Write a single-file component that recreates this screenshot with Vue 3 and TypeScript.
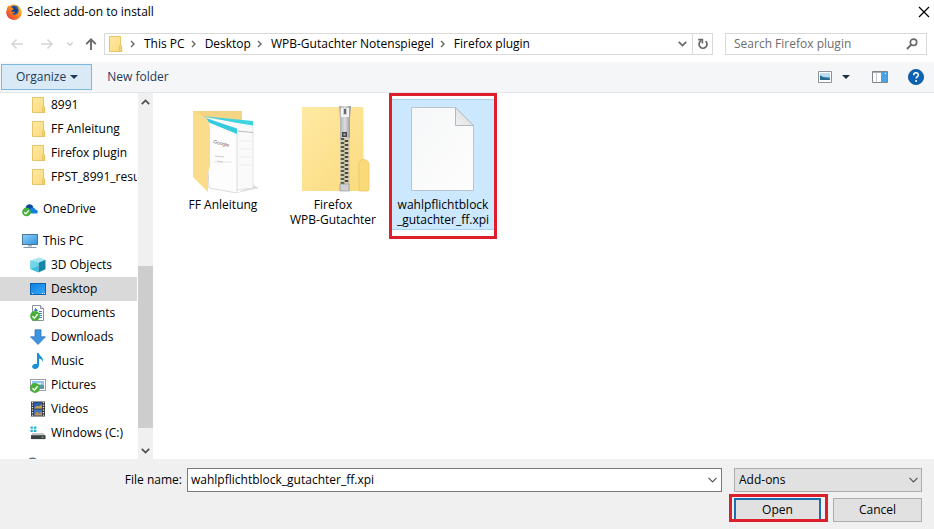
<script setup lang="ts">
import { ref } from 'vue'

interface TreeItem {
  label: string
  icon: string
  level: number
  gapBefore?: boolean
}

interface FileItem {
  lines: string[]
  icon: string
}

const crumbs: string[] = ['This PC', 'Desktop', 'WPB-Gutachter Notenspiegel', 'Firefox plugin']

const tree: TreeItem[] = [
  { label: '8991', icon: 'folder', level: 1 },
  { label: 'FF Anleitung', icon: 'folder', level: 1 },
  { label: 'Firefox plugin', icon: 'folder', level: 1 },
  { label: 'FPST_8991_result', icon: 'folder', level: 1 },
  { label: 'OneDrive', icon: 'onedrive', level: 0, gapBefore: true },
  { label: 'This PC', icon: 'pc', level: 0, gapBefore: true },
  { label: '3D Objects', icon: 'cube', level: 1 },
  { label: 'Desktop', icon: 'desktop', level: 1 },
  { label: 'Documents', icon: 'documents', level: 1 },
  { label: 'Downloads', icon: 'downloads', level: 1 },
  { label: 'Music', icon: 'music', level: 1 },
  { label: 'Pictures', icon: 'pictures', level: 1 },
  { label: 'Videos', icon: 'videos', level: 1 },
  { label: 'Windows (C:)', icon: 'drive', level: 1 },
]

const files: FileItem[] = [
  { lines: ['FF Anleitung'], icon: 'folder-open' },
  { lines: ['Firefox', 'WPB-Gutachter'], icon: 'folder-zip' },
  { lines: ['wahlpflichtblock', '_gutachter_ff.xpi'], icon: 'file' },
]

const activeFolder = ref('Desktop')
const selectedFile = ref(2)
const search = ref('')
const fileName = ref('wahlpflichtblock_gutachter_ff.xpi')
const fileType = ref('Add-ons')

function selectFile(index: number): void {
  selectedFile.value = index
  fileName.value = files[index].lines.join(files[index].icon === 'file' ? '' : ' ')
}
</script>

<template>
  <div class="dialog">
    <svg class="sprite" aria-hidden="true">
      <defs>
        <linearGradient id="g-folder" x1="0" y1="0" x2="1" y2="1">
          <stop offset="0" stop-color="#ffe9a4" /><stop offset="1" stop-color="#fada7c" />
        </linearGradient>
        <linearGradient id="g-screen" x1="0" y1="0" x2="1" y2="1">
          <stop offset="0" stop-color="#8fd0fa" /><stop offset="1" stop-color="#2f93dc" />
        </linearGradient>
        <linearGradient id="g-desk" x1="0" y1="0" x2="1" y2="1">
          <stop offset="0" stop-color="#0f7fe0" /><stop offset="1" stop-color="#36a9f8" />
        </linearGradient>
        <linearGradient id="g-page" x1="0" y1="0" x2="1" y2="1">
          <stop offset="0" stop-color="#f6f7f8" /><stop offset="1" stop-color="#fdfdfd" />
        </linearGradient>
        <linearGradient id="g-fold" x1="0" y1="1" x2="1" y2="0">
          <stop offset="0" stop-color="#f4f4f5" /><stop offset="1" stop-color="#cfd1d4" />
        </linearGradient>
        <linearGradient id="g-zip" x1="0" y1="0" x2="1" y2="0">
          <stop offset="0" stop-color="#a9aaac" /><stop offset=".5" stop-color="#dddddf" /><stop offset="1" stop-color="#8f9093" />
        </linearGradient>
        <linearGradient id="g-fox" x1="1" y1="0" x2="0" y2="1">
          <stop offset="0" stop-color="#ffd93b" /><stop offset=".45" stop-color="#ff8a1c" /><stop offset="1" stop-color="#e3264a" />
        </linearGradient>
      </defs>

      <symbol id="firefox" viewBox="0 0 16 16">
        <circle cx="8" cy="8.200" r="7.600" fill="url(#g-fox)" />
        <circle cx="8.400" cy="6.800" r="5.300" fill="#2b5fb3" />
        <path d="M7 2.200c2 .2 3 1.500 2.400 2.600l2.500.6-.8 3-3 1.800L5 8z" fill="#173f86" />
        <path d="M1 4.500C1.400 3 2 2.300 2.700 1.600l.8 1.900C5 3 6 3.400 6.600 4l1 1.300-2.300 1.400.3 1.200c1.500-.4 2.500.2 3.600-.1-.6 1.600-2 1.500-3 1.700 2 2.400 6.200 1 6.500-2.500.2-2-.7-3.500-1.700-4.500 2.300.8 4.500 3.200 4.600 6.200-.2 4-3.400 7-7.500 7C3.500 15.700.4 12.500.4 8.600z" fill="url(#g-fox)" />
      </symbol>

      <symbol id="folder" viewBox="0 0 16 16">
        <path d="M2.500.5h11v8.600l1.100 1.500v4.900H2.500z" fill="url(#g-folder)" stroke="#e6c56a" />
        <path d="M12.500 15.500V10.500l1-1.500 1.100 1.600v4.900z" fill="#f7d678" stroke="#e0b954" stroke-width=".7" />
      </symbol>

      <symbol id="tick" viewBox="0 0 9 9">
        <circle cx="4.500" cy="4.500" r="4.400" fill="#46b037" />
        <path d="M2.200 4.700l1.700 1.700 3-3.500" fill="none" stroke="#fff" stroke-width="1.300" />
      </symbol>

      <symbol id="onedrive" viewBox="0 0 16 16">
        <path d="M3.500 9C3 5.500 5 3.500 7.300 3.200c2 0 3.200 1 3.900 2.600L9 12H4z" fill="#0a4a9c" />
        <path d="M6 12.500c-1.200-2 .2-4 1.800-3.900C8.500 6 12.500 5.800 13.300 8.600c2.800.1 3.200 3.500 1.200 3.900z" fill="#1480d8" />
        <use href="#tick" x="0" y="6.500" width="9" height="9" />
      </symbol>

      <symbol id="pc" viewBox="0 0 16 16">
        <rect x=".5" y="1.500" width="15" height="10" fill="url(#g-screen)" stroke="#4c7896" />
        <path d="M6 12h4v1.500H6z" fill="#9fb0bb" />
        <path d="M1.500 14.500h13" stroke="#8496a2" />
      </symbol>

      <symbol id="cube" viewBox="0 0 16 16">
        <path d="M.5 3.500L9 .5l6.500 2.300-7 2.900z" fill="#a5e6f2" />
        <path d="M.5 3.500l8 2.200V15.500L.5 12.300z" fill="#3cc0de" />
        <path d="M8.500 5.700l7-2.900v9.400l-7 3.300z" fill="#1586a8" />
        <path d="M.5 3.500l8 2.200v3L.5 12z" fill="#72d6ea" />
      </symbol>

      <symbol id="desktop" viewBox="0 0 16 16">
        <rect x=".5" y="2.500" width="15" height="11" fill="url(#g-desk)" stroke="#0b62b0" />
        <path d="M2 12.500h1m9 0h1m1 0h1" stroke="#cfe9fc" />
      </symbol>

      <symbol id="documents" viewBox="0 0 16 16">
        <path d="M2.500.5h8l3 3v12h-11z" fill="#fff" stroke="#8a9299" />
        <path d="M10.500.5v3h3" fill="#e4e7ea" stroke="#8a9299" />
        <path d="M4.500 5.500l1-2 2 2zM9 6.500h3M5 8.500h7M8 10.500h4M9 12.500h3" fill="#2c82c9" stroke="#3585bd" />
        <use href="#tick" x="0" y="6" width="10" height="10" />
      </symbol>

      <symbol id="downloads" viewBox="0 0 16 16">
        <path d="M5 .8h6v7h4.500L8 15.500.5 7.800H5z" fill="#3f94de" stroke="#2b78be" stroke-width=".8" />
      </symbol>

      <symbol id="music" viewBox="0 0 16 16">
        <path d="M7 0h1.700c.4 3 5.600 4.200 4 9.200-.2-2-1.500-3.200-3.700-3.700v7c0 2-1.900 3.400-4 3.400-2 0-3.200-1.100-2.800-2.600.3-1.800 2.700-3 4.800-2.300z" fill="#198fd6" />
      </symbol>

      <symbol id="pictures" viewBox="0 0 16 16">
        <rect x=".5" y="2.500" width="15" height="11" fill="#fff" stroke="#9aa1a8" />
        <path d="M2 4h12v4.500H2z" fill="#8ec8f1" /><path d="M2 9l5-2 7 1v4H2z" fill="#5a9aa6" />
        <path d="M5 6h6v1.500H5z" fill="#e8f4fb" />
        <use href="#tick" x="0" y="6" width="10" height="10" />
      </symbol>

      <symbol id="videos" viewBox="0 0 16 16">
        <path d="M1 .5h14v15H1z" fill="#303236" />
        <path d="M2.500 1v14M13.500 1v14" stroke="#e6e6e6" stroke-width="1.400" stroke-dasharray="1.200 1.300" />
        <path d="M4 1.500h8v6H4z" fill="#2f5fb0" /><path d="M4 7.500l3-3 2 1 3-2v4z" fill="#c7a443" />
        <path d="M4 8.500h8v6H4z" fill="#4272ba" /><path d="M4 14.500l3-4 2 2 3-2v4z" fill="#b9905a" />
      </symbol>

      <symbol id="drive" viewBox="0 0 16 16">
        <path d="M.5 1.500h2.300v2.300H.5zM3.800 1.500h2.600v2.300H3.800zM.5 4.800h2.300v2.300H.5zM3.800 4.800h2.600v2.300H3.800z" fill="#1fb3d6" />
        <path d="M2.500 8h10.800l2 2.500H1z" fill="#c4c8cb" />
        <path d="M1 10.200h14.500v3.900H1z" fill="#3b3f43" />
        <path d="M11.500 12.200h2" stroke="#5de36a" />
      </symbol>

      <symbol id="network" viewBox="0 0 16 16">
        <path d="M7 1.500c2-1.500 6-1.500 8 1v8H7z" fill="#64798a" />
      </symbol>

      <symbol id="folder-open" viewBox="0 0 80 88">
        <path d="M10 6h49v70H27L10 60z" fill="#f5d583" />
        <path d="M70 80l6 3-22 5z" fill="#dedede" />
        <path d="M20 12l50 7v64l-16 2z" fill="#fafafa" stroke="#d6d8da" stroke-width=".7" />
        <path d="M19 11l51 5v4.500l-16-2.500z" fill="#3fd3e0" />
        <path d="M54 26l16 1.500" stroke="#a8a8a8" stroke-width=".8" />
        <path d="M56 36h12M56 44h12M56 52h12M56 60h12" stroke="#efefef" />
        <path d="M22 14l32 13v61l-28-5z" fill="#fdfdfe" stroke="#c9cbce" stroke-width=".7" />
        <path d="M20 12l34 11.500V29L21 15.500z" fill="#35cbdc" />
        <path d="M10 6l13 7c3 3 4 8 4 14v33c0 3-2 5-2 8v19L10 72z" fill="#fbdc8a" />
        <path d="M31 57h18" stroke="#e4e4e4" />
        <text x="30" y="38" font-family="Liberation Sans, sans-serif" font-size="5" fill="#7d5965" transform="rotate(14 30 38)">Google</text>
        <path d="M32 51l9 1M34 56l6 1" stroke="#bdbdbd" stroke-width=".8" />
      </symbol>

      <symbol id="folder-zip" viewBox="0 0 80 88">
        <path d="M9 2h59.500q2 0 2 2v50l5 4.500V86H9z" fill="url(#g-folder)" />
        <path d="M66 86V60q0-5 4.500-5.500Q76 55 76 60v24q0 2-2 2z" fill="#f9d978" stroke="#ecc765" stroke-width=".8" />
        <path d="M47 2h10v84H47z" fill="#d6cda9" />
        <path d="M49.500 33v48" stroke="#55585a" stroke-width="3.500" stroke-dasharray="2 2" />
        <path d="M53.500 35v48" stroke="#46494b" stroke-width="3.500" stroke-dasharray="2 2" />
        <path d="M46 1h12l-1 12v20H47V13z" fill="url(#g-zip)" />
        <path d="M49 3v8h6V3" fill="none" stroke="#f5f5f5" stroke-width="2" />
        <path d="M52 4v5" stroke="#68696b" stroke-width="2" />
        <path d="M49 27h5v5h-5z" fill="#464749" /><path d="M50.500 28.500h2v2h-2z" fill="#bbb" />
        <path d="M47 79h9v7h-9z" fill="#cfd0d1" stroke="#999" stroke-width=".7" />
      </symbol>

      <symbol id="file" viewBox="0 0 80 88">
        <path d="M8.500 2.500h44l18 18v65h-62z" fill="url(#g-page)" stroke="#bcc4ca" />
        <path d="M52.500 2.500v18h18z" fill="url(#g-fold)" stroke="#b3b8bd" />
      </symbol>
    </svg>

    <header class="titlebar">
      <svg class="icon"><use href="#firefox" /></svg>
      <h1 class="title">Select add-on to install</h1>
      <button class="plain close" type="button" aria-label="Close">
        <svg width="12" height="12" viewBox="0 0 12 12"><path d="M1 1l10 10M11 1L1 11" stroke="#000" stroke-width="1.200" /></svg>
      </button>
    </header>

    <div class="navbar">
      <button class="plain nav-step" type="button" aria-label="Back" disabled>
        <svg width="12" height="12" viewBox="0 0 12 12"><path d="M12 6H1.500M5.500 1.500L1 6l4.500 4.500" fill="none" stroke="#d5d5d5" stroke-width="1.500" /></svg>
      </button>
      <button class="plain nav-step" type="button" aria-label="Forward" disabled>
        <svg width="12" height="12" viewBox="0 0 12 12"><path d="M0 6h10.500M6.500 1.500L11 6l-4.500 4.500" fill="none" stroke="#d5d5d5" stroke-width="1.500" /></svg>
      </button>
      <button class="plain nav-recent" type="button" aria-label="Recent locations" disabled>
        <svg width="6" height="4" viewBox="0 0 6 4"><path d="M.3.500L3 3.200 5.700.5" fill="none" stroke="#ccc" stroke-width="1.300" /></svg>
      </button>
      <button class="plain nav-up" type="button" aria-label="Up">
        <svg width="12" height="12" viewBox="0 0 12 12"><path d="M6 12V1.500M1.200 6.200L6 1.400l4.800 4.800" fill="none" stroke="#6a6a6a" stroke-width="1.900" /></svg>
      </button>

      <nav class="address" aria-label="Address">
        <svg class="icon"><use href="#folder" /></svg>
        <ol class="crumbs">
          <li v-for="crumb in crumbs" :key="crumb" class="crumb">
            <svg class="crumb-arrow" width="5" height="8" viewBox="0 0 5 8"><path d="M1 1l3 3-3 3" fill="none" stroke="#666" stroke-width="1.400" /></svg>
            <a class="crumb-link" href="#">{{ crumb }}</a>
          </li>
        </ol>
        <button class="plain address-drop" type="button" aria-label="Previous locations">
          <svg width="9" height="6" viewBox="0 0 9 6"><path d="M.8.900l3.700 3.700L8.200.9" fill="none" stroke="#6a6a6a" stroke-width="1.800" /></svg>
        </button>
        <button class="plain refresh" type="button" aria-label="Refresh">
          <svg width="12" height="12" viewBox="0 0 12 12"><path d="M8.600 3.200A4 4 0 1 1 4.200 2.700" fill="none" stroke="#666" stroke-width="1.700" /><path d="M1.200 1.600h4.200v4" fill="none" stroke="#666" stroke-width="1.600" /></svg>
        </button>
      </nav>

      <div class="search">
        <input v-model="search" class="search-input" type="text" aria-label="Search Firefox plugin" placeholder="Search Firefox plugin">
        <svg width="12" height="12" viewBox="0 0 12 12"><circle cx="7.500" cy="4.300" r="3.200" fill="none" stroke="#666" stroke-width="1.600" /><path d="M5.200 6.700L1 11" stroke="#666" stroke-width="1.900" /></svg>
      </div>
    </div>

    <div class="toolbar">
      <button class="organize" type="button">
        Organize
        <svg width="8" height="4" viewBox="0 0 8 4"><path d="M0 0h8L4 4z" fill="#1e395b" /></svg>
      </button>
      <button class="plain new-folder" type="button">New folder</button>
      <div class="tools">
        <button class="plain" type="button" aria-label="Change your view">
          <svg width="14" height="12" viewBox="0 0 14 12"><path d="M.5.500h13v11H.5z" fill="#fff" stroke="#8d949b" /><path d="M2 2h10v4H2z" fill="#b9def5" /><path d="M2 5c3 2 6 0 10 1.500V9H2z" fill="#4a9bc9" /><path d="M2 4.500c2 0 3 3 10 3V9H2z" fill="#286a8e" /></svg>
        </button>
        <button class="plain view-drop" type="button" aria-label="More view options">
          <svg width="8" height="4" viewBox="0 0 8 4"><path d="M0 0h8L4 4z" fill="#1e2f45" /></svg>
        </button>
        <button class="plain preview" type="button" aria-label="Show the preview pane">
          <svg width="16" height="12" viewBox="0 0 16 12"><path d="M.5.500h15v11H.5z" fill="#fff" stroke="#7e858c" /><path d="M1 1.500h14" stroke="#a9afb5" /><path d="M4.500 2v9" stroke="#c5c9cd" /><path d="M9 1h6v10H9z" fill="#4aa3e2" /><path d="M13 2.500h1" stroke="#fff" /></svg>
        </button>
        <button class="plain help" type="button" aria-label="Get help">
          <svg width="16" height="16" viewBox="0 0 16 16"><circle cx="8" cy="8" r="7.600" fill="#0b63b4" stroke="#0a4e92" stroke-width=".8" /><path d="M5.700 6.200c0-3.200 4.800-3 4.700-.2 0 1.600-2.300 1.700-2.300 3.600" fill="none" stroke="#fff" stroke-width="1.500" /><circle cx="8.100" cy="11.900" r="1" fill="#fff" /></svg>
        </button>
      </div>
    </div>

    <main class="body">
      <ul class="tree">
        <li v-for="item in tree" :key="item.label" :class="{ 'gap-before': item.gapBefore }">
          <button
            class="tree-item"
            type="button"
            :class="{ nested: item.level === 1, active: item.label === activeFolder }"
            @click="activeFolder = item.label"
          >
            <svg class="icon"><use :href="'#' + item.icon" /></svg>
            <span>{{ item.label }}</span>
          </button>
        </li>
        <li class="gap-before">
          <button class="tree-item" type="button" aria-label="Network">
            <svg class="icon"><use href="#network" /></svg>
          </button>
        </li>
      </ul>
      <div class="scrollbar" aria-hidden="true">
        <svg class="scroll-arrow" width="9" height="6" viewBox="0 0 9 6"><path d="M.8 5.100l3.700-3.700 3.700 3.700" fill="none" stroke="#505050" stroke-width="1.800" /></svg>
        <div class="scroll-track"><div class="scroll-thumb" /></div>
        <svg class="scroll-arrow" width="9" height="6" viewBox="0 0 9 6"><path d="M.8.900l3.700 3.700L8.200.9" fill="none" stroke="#505050" stroke-width="1.800" /></svg>
      </div>
      <div class="files">
        <button
          v-for="(file, index) in files"
          :key="file.icon"
          class="file"
          type="button"
          :class="{ selected: index === selectedFile }"
          @click="selectFile(index)"
        >
          <svg class="file-icon"><use :href="'#' + file.icon" /></svg>
          <span class="file-name">{{ file.lines.join('\n') }}</span>
        </button>
      </div>
    </main>

    <footer class="footer">
      <label class="name-label" for="file-name">File name:</label>
      <div class="name-box">
        <input id="file-name" v-model="fileName" class="name-input" type="text">
        <button class="plain name-drop" type="button" aria-label="Recent file names">
          <svg width="9" height="6" viewBox="0 0 9 6"><path d="M.5.800l4 4 4-4" fill="none" stroke="#555" stroke-width="1.200" /></svg>
        </button>
      </div>
      <div class="type-box">
        <select v-model="fileType" class="type-select" aria-label="File type">
          <option>Add-ons</option>
        </select>
        <svg class="type-arrow" width="9" height="6" viewBox="0 0 9 6"><path d="M.5.800l4 4 4-4" fill="none" stroke="#555" stroke-width="1.200" /></svg>
      </div>
      <div class="actions">
        <div class="marked">
          <button class="action primary" type="button">Open</button>
        </div>
        <button class="action" type="button">Cancel</button>
      </div>
    </footer>
  </div>
</template>

<style>
body {
  margin: 0;
}
</style>

<style scoped>
.dialog {
  display: flex;
  flex-direction: column;
  height: 100vh;
  overflow: hidden;
  background: #fff;
  color: #000;
  font: 12px/16px "Open Sans", "Noto Sans", sans-serif;
}
.dialog * {
  box-sizing: border-box;
}
.sprite {
  position: absolute;
  width: 0;
  height: 0;
}
svg {
  flex: none;
  display: block;
}
button,
input,
select {
  margin: 0;
  padding: 0;
  font: inherit;
  color: inherit;
  border-radius: 0;
}
.plain {
  display: flex;
  align-items: center;
  justify-content: center;
  border: 0;
  background: none;
}
.icon {
  width: 16px;
  height: 16px;
}

.titlebar {
  display: flex;
  align-items: center;
  gap: 5px;
  height: 24px;
  padding: 0 4px 0 6px;
}
.title {
  margin: 0;
  font-size: 12px;
  font-weight: 400;
}
.close {
  width: 12px;
  height: 24px;
  margin-left: auto;
}

.navbar {
  display: flex;
  align-items: center;
  height: 38px;
  padding: 2px 7px 0 2px;
}
.nav-step {
  width: 30px;
  height: 22px;
}
.nav-recent {
  width: 16px;
  height: 22px;
}
.nav-up {
  width: 26px;
  height: 22px;
}
.address {
  display: flex;
  align-items: center;
  flex: 1;
  min-width: 0;
  height: 22px;
  margin-right: 12px;
  padding-left: 2px;
  border: 1px solid #d9d9d9;
}
.crumbs {
  display: flex;
  flex: 1;
  min-width: 0;
  overflow: hidden;
  margin: 0;
  padding: 0 0 0 7px;
  list-style: none;
}
.crumb {
  display: flex;
  align-items: center;
  white-space: nowrap;
}
.crumb-link {
  padding: 0 6px 0 9px;
  color: inherit;
  text-decoration: none;
}
.address-drop {
  width: 20px;
  height: 20px;
}
.refresh {
  width: 20px;
  height: 20px;
  border-left: 1px solid #d9d9d9;
}
.search {
  display: flex;
  align-items: center;
  width: 202px;
  height: 22px;
  padding: 0 8px;
  border: 1px solid #d9d9d9;
}
.search-input {
  flex: 1;
  min-width: 0;
  border: 0;
  outline: 0;
  background: none;
}
.search-input::placeholder {
  color: #6d6d6d;
  opacity: 1;
}

.toolbar {
  display: flex;
  align-items: center;
  height: 31px;
  padding: 0 10px 0 1px;
  background: #f5f6f7;
  border-bottom: 1px solid #e4e6e8;
  color: #1e395b;
}
.organize {
  display: flex;
  align-items: center;
  gap: 4px;
  height: 26px;
  padding: 0 13px 0 14px;
  border: 1px solid #7ab8dc;
  background: #d9eaf6;
}
.new-folder {
  height: 26px;
  padding: 0 15px;
}
.tools {
  display: flex;
  align-items: center;
  margin-left: auto;
}
.view-drop {
  width: 28px;
  height: 26px;
}
.preview {
  margin: 0 20px 0 12px;
}

.body {
  display: flex;
  flex: 1;
  min-height: 0;
}
.tree {
  width: 137px;
  margin: 0;
  padding: 0;
  overflow: hidden;
  list-style: none;
}
.gap-before {
  margin-top: 8px;
}
.tree-item {
  display: flex;
  align-items: center;
  gap: 5px;
  width: 100%;
  height: 24px;
  padding-left: 22px;
  border: 0;
  background: none;
  white-space: nowrap;
}
.tree-item.nested {
  padding-left: 30px;
}
.tree-item.active {
  background: #d9d9d9;
}
.scrollbar {
  display: flex;
  flex-direction: column;
  width: 15px;
  margin-left: 1px;
  padding: 6px 0 5px;
  background: #f0f0f0;
}
.scroll-arrow {
  align-self: center;
}
.scroll-track {
  display: grid;
  grid-template-rows: 156fr 161fr 14fr;
  flex: 1;
  padding: 5px 0 6px;
}
.scroll-thumb {
  grid-row: 2;
  background: #cdcdcd;
}
.files {
  display: flex;
  flex-wrap: wrap;
  align-items: flex-start;
  align-content: flex-start;
  flex: 1;
  gap: 8px;
  padding: 6px 18px 0 19px;
}
.file {
  position: relative;
  display: flex;
  flex-direction: column;
  align-items: center;
  width: 102px;
  padding: 6px 0 3px;
  border: 0;
  background: none;
}
.file-icon {
  width: 80px;
  height: 88px;
  margin-bottom: 4px;
}
.file-name {
  line-height: 15px;
  text-align: center;
  white-space: pre;
}
.file.selected {
  background: #cce8ff;
  box-shadow: inset 0 1px #a5d3f3, inset 0 -1px #a5d3f3;
}
.file.selected::after {
  content: "";
  position: absolute;
  inset: -6px -3px -9px;
  border: 3px solid #dd1f2b;
}

.footer {
  display: grid;
  grid-template-columns: 182px minmax(0, 1fr) 188px;
  grid-template-rows: 24px 24px;
  row-gap: 6px;
  padding: 9px 12px 7px 0;
  background: #f0f0f0;
}
.name-label {
  align-self: center;
  text-align: right;
}
.name-box {
  display: flex;
  align-items: center;
  margin: 0 12px 0 5px;
  border: 1px solid #7a7a7a;
  background: #fff;
}
.name-input {
  flex: 1;
  min-width: 0;
  padding-left: 3px;
  border: 0;
  outline: 0;
  background: none;
}
.name-drop {
  width: 17px;
  height: 22px;
}
.type-box {
  position: relative;
  display: flex;
}
.type-select {
  flex: 1;
  padding: 0 20px 0 4px;
  border: 1px solid #adadad;
  background: #e1e1e1;
  appearance: none;
}
.type-arrow {
  position: absolute;
  top: 9px;
  right: 4px;
  pointer-events: none;
}
.actions {
  display: flex;
  gap: 12px;
  grid-column: 3;
}
.marked {
  position: relative;
  display: flex;
  flex: 1;
}
.marked::after {
  content: "";
  position: absolute;
  inset: -4px -7px 0 -5px;
  border: 3px solid #dd1f2b;
  pointer-events: none;
}
.action {
  flex: 1;
  border: 1px solid #adadad;
  background: #e1e1e1;
}
.action.primary {
  border: 2px solid #1a6fb0;
}
</style>
